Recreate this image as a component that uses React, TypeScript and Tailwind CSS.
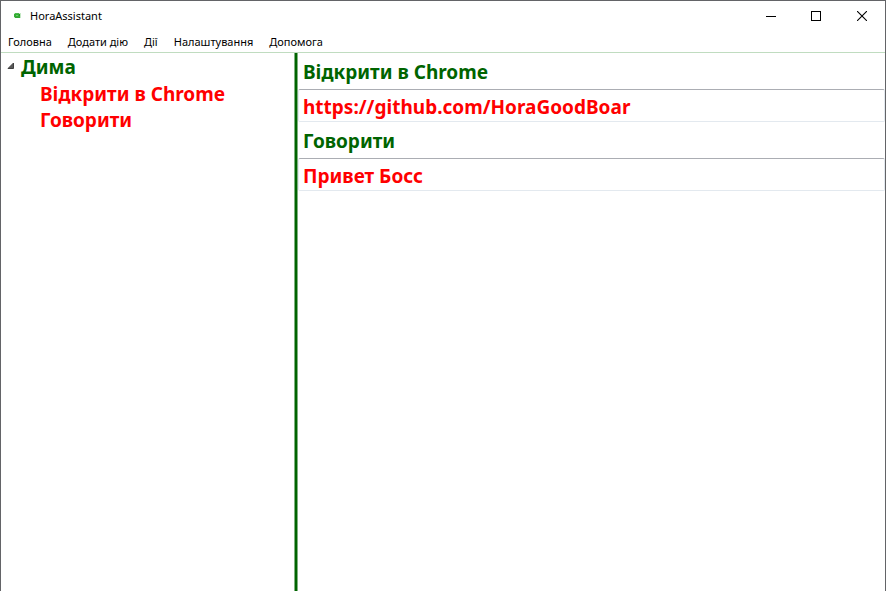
import { useState } from "react";

const menuItems = ["Головна", "Додати дію", "Дії", "Налаштування", "Допомога"];

const actions = [
  { id: "chrome", label: "Відкрити в Chrome", value: "https://github.com/HoraGoodBoar" },
  { id: "speak", label: "Говорити", value: "Привет Босс" },
];

function AppIcon() {
  return (
    <svg width="16" height="16" viewBox="0 0 16 16" shapeRendering="crispEdges" aria-hidden="true">
      <rect x="5" y="5" width="7" height="5" fill="#c4e8c4" />
      <rect x="5" y="6" width="6" height="3" fill="#35ad35" />
      <rect x="6" y="5" width="4" height="1" fill="#4cba4c" />
      <rect x="6" y="9" width="5" height="1" fill="#35a535" />
      <rect x="7" y="7" width="2" height="1" fill="#6cc86c" />
      <rect x="10" y="6" width="1" height="2" fill="#229722" />
    </svg>
  );
}

function TitleBar() {
  return (
    <header className="flex h-[30px] items-center pl-2">
      <AppIcon />
      <h1 className="ml-[5px] flex-1 text-[11px] leading-4">HoraAssistant</h1>
      <button type="button" aria-label="Minimize" className="flex h-full w-[45px] items-center justify-center">
        <svg width="10" height="10" viewBox="0 0 10 10" shapeRendering="crispEdges">
          <path d="M0 5.5h10" stroke="#000" />
        </svg>
      </button>
      <button type="button" aria-label="Maximize" className="flex h-full w-[46px] items-center justify-center">
        <svg width="10" height="10" viewBox="0 0 10 10" shapeRendering="crispEdges">
          <path d="M.5 .5h9v9h-9z" fill="none" stroke="#000" />
        </svg>
      </button>
      <button type="button" aria-label="Close" className="flex h-full w-[46px] items-center justify-center">
        <svg width="10" height="10" viewBox="0 0 10 10">
          <path d="M0 0l10 10M10 0L0 10" stroke="#000" strokeWidth="1.1" />
        </svg>
      </button>
    </header>
  );
}

function ActionTree() {
  const [open, setOpen] = useState(true);
  return (
    <aside className="w-[293px] shrink-0 text-[19px] font-bold leading-[26px]">
      <button
        type="button"
        aria-expanded={open}
        onClick={() => setOpen(!open)}
        className="flex h-[28px] items-center pl-[6px] text-[#006400]"
      >
        <svg width="8" height="8" viewBox="0 0 8 8" className="mr-[6px] mb-[2px]" aria-hidden="true">
          <path d="M6.5 1v5.5H1z" fill="#595959" stroke="#404040" />
        </svg>
        Дима
      </button>
      {open && (
        <ul className="pl-[39px] text-[#ff0000]">
          {actions.map((a) => (
            <li key={a.id}>{a.label}</li>
          ))}
        </ul>
      )}
    </aside>
  );
}

export default function App() {
  return (
    <div className="flex h-screen flex-col bg-white pb-[3px] font-['Segoe_UI','Noto_Sans',sans-serif] text-black">
      <div className="flex flex-1 flex-col border-x border-t border-[#636467]">
        <TitleBar />
        <nav className="flex h-[22px] items-center gap-4 border-b border-[#c0dcc0] pl-[7px] text-[11px] leading-4">
          {menuItems.map((label) => (
            <button key={label} type="button" className="whitespace-nowrap">
              {label}
            </button>
          ))}
        </nav>
        <div className="flex flex-1">
          <ActionTree />
          <div className="w-1 shrink-0 border-x border-[#7fb17f] bg-[#006400]" />
          <main className="min-w-0 flex-1 text-[19px] font-bold leading-[26px]">
            {actions.map((a) => (
              <div key={a.id}>
                <label htmlFor={a.id} className="flex h-9 items-center pt-[2px] pl-[5px] text-[#006400]">
                  {a.label}
                </label>
                <input
                  id={a.id}
                  type="text"
                  defaultValue={a.value}
                  spellCheck={false}
                  className="block h-[33px] w-full rounded-[2px] border border-[#e3e9ef] border-t-[#abadb3] px-1 pt-[2px] text-[#ff0000] outline-none"
                />
              </div>
            ))}
          </main>
        </div>
      </div>
    </div>
  );
}
